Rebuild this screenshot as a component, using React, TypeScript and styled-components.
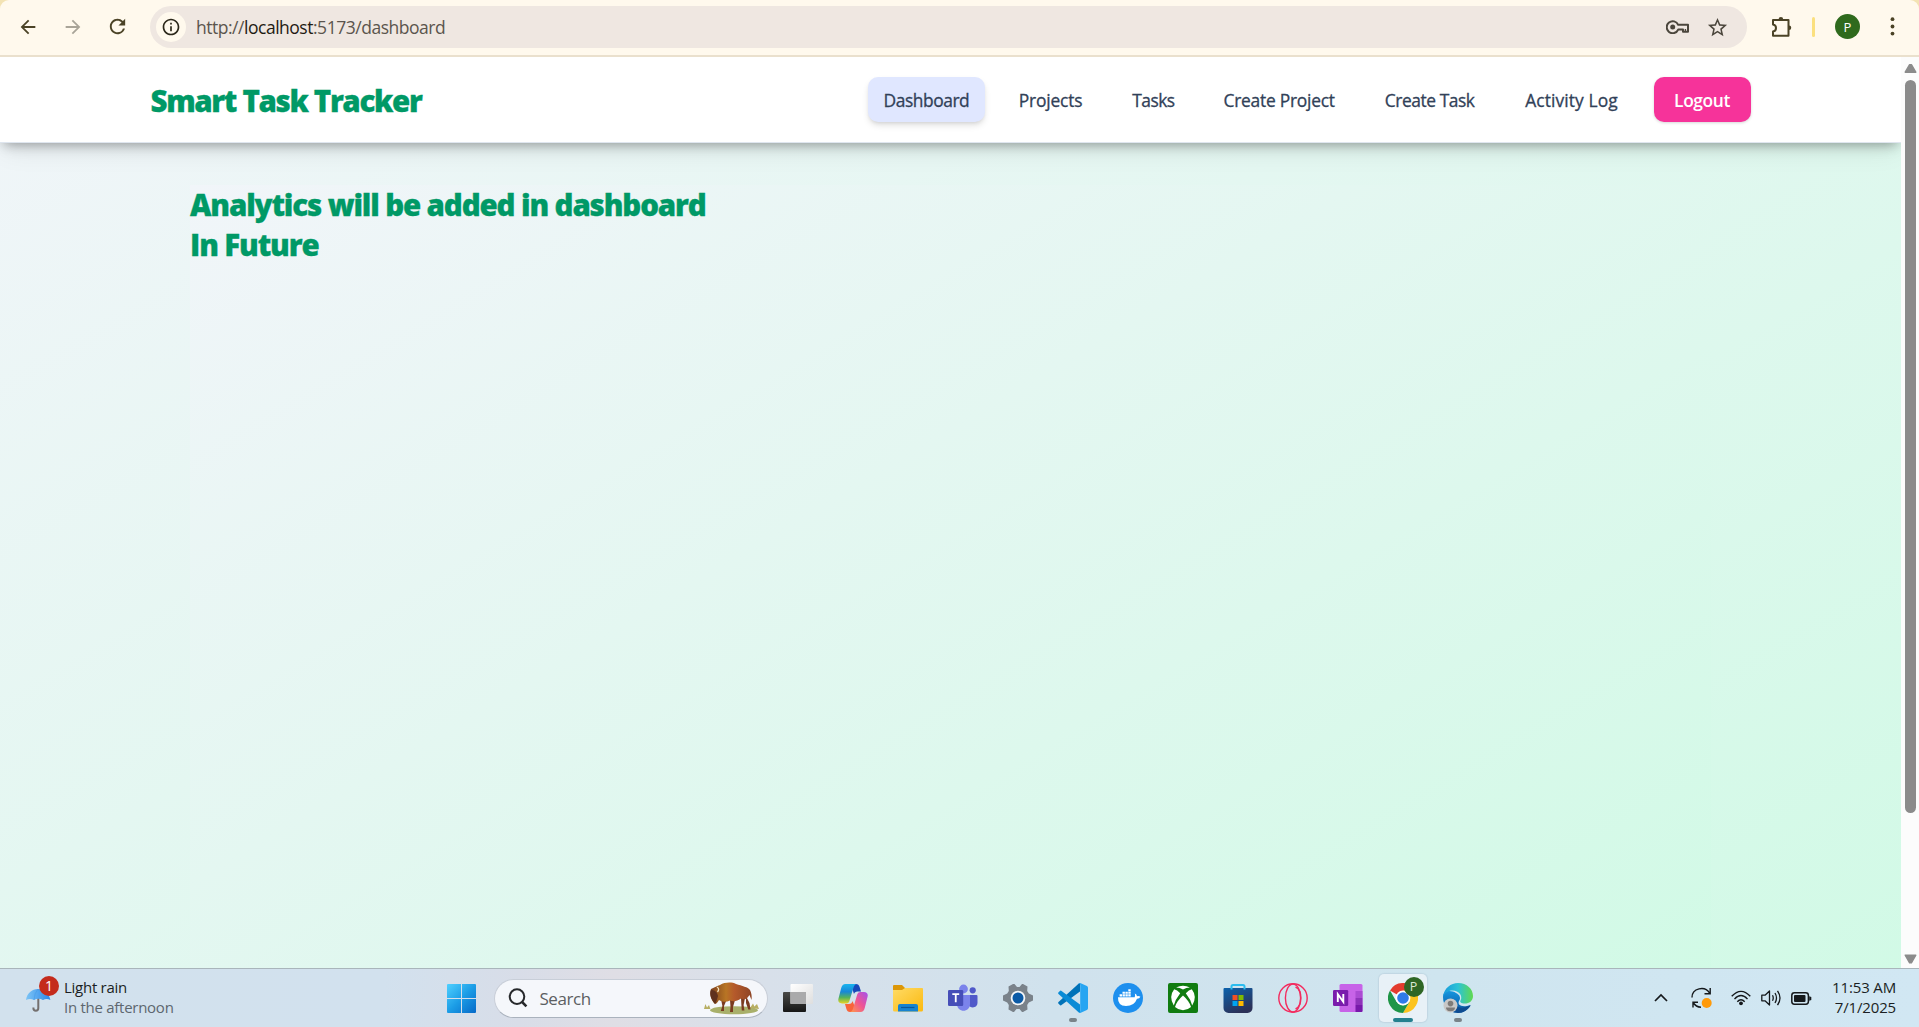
import React from "react";
import styled, { createGlobalStyle } from "styled-components";
import { MdArrowBack, MdArrowForward, MdRefresh, MdInfoOutline, MdStarOutline } from "react-icons/md";

const uiFont = `"Segoe UI", "Open Sans", "Noto Sans", sans-serif`;

const GlobalStyle = createGlobalStyle`
  *, *::before, *::after { box-sizing: border-box; }
  body { margin: 0; font-family: ${uiFont}; overflow: hidden; }
  svg { display: block; flex: none; }
`;

const Screen = styled.div`
  display: flex;
  flex-direction: column;
  width: 1919px;
  height: 1027px;
  overflow: hidden;
`;

/* ---------- Browser toolbar ---------- */

const ToolbarFrame = styled.div`
  flex: none;
  background: #f3e3b4;
`;

const Toolbar = styled.header`
  display: flex;
  align-items: center;
  height: 57px;
  padding: 0 14px 2px 15px;
  background: #fff9ed;
  border-bottom: 2px solid #eae0cd;
  border-radius: 9px 9px 0 0;
  color: #4b4326;
`;

const ToolButton = styled.span<{ $dim?: boolean }>`
  display: grid;
  place-items: center;
  width: 45px;
  height: 45px;
  color: ${(p) => (p.$dim ? "#a9a498" : "#4b4326")};
`;

const NavButtons = styled.div`
  display: flex;
  margin-left: -10px;
`;

const AddressBar = styled.div`
  display: flex;
  align-items: center;
  width: 1597px;
  height: 42px;
  margin-left: 10px;
  padding: 0 18px 0 6px;
  background: #efe7e1;
  border-radius: 21px;
`;

const SiteInfo = styled.span`
  display: grid;
  place-items: center;
  width: 30px;
  height: 30px;
  border-radius: 50%;
  background: #fff9ed;
  color: #2b2719;
`;

const Url = styled.span`
  flex: 1;
  margin-left: 10px;
  padding-top: 1px;
  font-size: 17.5px;
  line-height: 24px;
  letter-spacing: -0.48px;
  color: #5b554d;
`;

const Host = styled.span`
  color: #1f1b13;
`;

const AddressIcons = styled.div`
  display: flex;
  align-items: center;
  gap: 17px;
  padding-top: 1px;
  color: #4b463c;
`;

const Divider = styled.span`
  width: 3px;
  height: 20px;
  margin-left: 19px;
  border-radius: 2px;
  background: #fbe07f;
`;

const Avatar = styled.span`
  display: grid;
  place-items: center;
  width: 25px;
  height: 25px;
  margin-left: 20px;
  border-radius: 50%;
  background: #2f6a1d;
  color: #fff;
  font-size: 13px;
`;

const Extensions = styled.span`
  margin-left: 24px;
`;

const Menu = styled.span`
  margin-left: 30px;
`;

/* ---------- Web page ---------- */

const Viewport = styled.div`
  display: flex;
  flex: none;
  height: 911px;
  overflow: hidden;
`;

const Page = styled.div`
  flex: none;
  width: 1901px;
  height: 1083px;
  background: linear-gradient(to bottom right, #f1f5f9, #d0fae5 97%);
`;

const NavBar = styled.nav`
  display: flex;
  align-items: center;
  justify-content: space-between;
  height: 86px;
  padding: 0 150.5px;
  background: #fff;
  border-bottom: 1px solid #dfe6ef;
  box-shadow: 0 5px 12px -4px rgba(0, 0, 0, 0.38), 0 12px 24px -4px rgba(0, 0, 0, 0.08);
`;

const Title = styled.h1<{ $spacing: number; $shift?: number }>`
  margin: 0;
  padding-top: ${(p) => p.$shift ?? 0}px;
  font-size: 29.5px;
  line-height: 40px;
  font-weight: 800;
  letter-spacing: ${(p) => p.$spacing}px;
  -webkit-text-stroke: 0.3px currentColor;
  color: #009966;
`;

const Links = styled.div`
  display: flex;
  align-items: center;
  gap: 18.33px;
`;

const NavLink = styled.a<{ $width: number; $spacing: number; $active?: boolean }>`
  width: ${(p) => p.$width}px;
  height: 45px;
  border-radius: 10px;
  padding-left: 16px;
  white-space: nowrap;
  font-size: 17.4px;
  line-height: 46px;
  font-weight: 500;
  letter-spacing: ${(p) => p.$spacing}px;
  -webkit-text-stroke: 0.3px currentColor;
  color: #314158;
  background: ${(p) => (p.$active ? "#e0e7ff" : "transparent")};
  box-shadow: ${(p) => (p.$active ? "0 4px 7px -1px rgba(0,0,0,.13), 0 2px 4px -2px rgba(0,0,0,.12)" : "none")};
`;

const Logout = styled.button`
  width: 97px;
  height: 45px;
  border: 0;
  border-radius: 10px;
  padding: 0;
  background: #f6339a;
  box-shadow: 0 1px 3px rgba(0, 0, 0, 0.16);
  color: #fff;
  font-family: inherit;
  font-size: 17.4px;
  font-weight: 600;
  line-height: 46px;
  letter-spacing: -0.4px;
`;

const Content = styled.main`
  width: 1521px;
  height: 911px;
  margin: 42px auto 0;
  background: linear-gradient(to bottom right, #f1f5f9, #d0fae5 97%);
`;

const ScrollTrack = styled.div`
  display: flex;
  flex-direction: column;
  align-items: center;
  width: 18px;
  height: 911px;
  padding: 6px 0 3px 1px;
  background: #fcfcfc;
`;

const ScrollThumb = styled.div`
  width: 11px;
  height: 733px;
  margin: 6px 0 auto;
  border-radius: 6px;
  background: #8b8b8b;
`;

/* ---------- Taskbar ---------- */

const Taskbar = styled.footer`
  display: flex;
  align-items: center;
  flex: none;
  height: 59px;
  border-top: 1px solid #a9b5bb;
  background: linear-gradient(90deg, #d2e1ed 0%, #d2e1ee 20%, #d8dde8 27%, #dfdee5 32%, #d8e0ea 40%, #d0e2ed 55%, #cfe5ef 75%, #d1e7f3 100%);
`;

const Weather = styled.div`
  display: flex;
  align-items: center;
  width: 434px;
  padding-left: 26px;
`;

const WeatherIcon = styled.span`
  position: relative;
  width: 38px;
  height: 44px;
  padding-top: 11px;
`;

const Badge = styled.span`
  position: absolute;
  top: 0;
  left: 13px;
  width: 20px;
  height: 20px;
  border-radius: 50%;
  background: #c42b1c;
  color: #fff;
  font-size: 14px;
  line-height: 20px;
  text-align: center;
`;

const TwoLines = styled.div<{ $right?: boolean }>`
  padding-bottom: 2px;
  font-size: 15px;
  line-height: 20px;
  letter-spacing: ${(p) => (p.$right ? -0.15 : -0.27)}px;
  color: #1b1f23;
  text-align: ${(p) => (p.$right ? "right" : "left")};
  white-space: nowrap;
`;

const Muted = styled.div`
  color: #5d676f;
`;

const Cell = styled.div`
  position: relative;
  display: grid;
  place-items: center;
  width: 55px;
  height: 58px;
`;

const SearchBox = styled.div`
  display: flex;
  align-items: center;
  width: 274px;
  height: 39px;
  margin: 0 2.5px 0 4.5px;
  padding: 0 7px 0 13px;
  border: 1px solid #c8ced8;
  border-bottom-color: #aab2bd;
  border-radius: 20px;
  background: #f5f7fb;
`;

const SearchLabel = styled.span`
  flex: 1;
  margin-left: 12px;
  padding-top: 1px;
  font-size: 17px;
  line-height: 24px;
  letter-spacing: -0.45px;
  color: #5c5e62;
`;

const ActiveTile = styled.div`
  display: grid;
  place-items: center;
  width: 48px;
  height: 48px;
  border-radius: 5px;
  background: #e8f1f7;
  box-shadow: 0 0 1px 1px rgba(140, 160, 180, 0.2);
`;

const ProfileBadge = styled.span`
  position: absolute;
  top: 8px;
  left: 28.5px;
  width: 20px;
  height: 20px;
  border-radius: 50%;
  background: #2f6625;
  color: #dbe8d5;
  font-size: 12.5px;
  line-height: 20px;
  text-align: center;
`;

const Indicator = styled.span<{ $active?: boolean }>`
  position: absolute;
  bottom: 5px;
  left: 50%;
  transform: translateX(-50%);
  width: ${(p) => (p.$active ? 20 : 8)}px;
  height: 4px;
  border-radius: 2px;
  background: ${(p) => (p.$active ? "#23808f" : "#798389")};
`;

const Tray = styled.div`
  display: flex;
  align-items: center;
  margin-left: auto;
  padding-right: 23px;
  color: #15191c;
`;

const TrayIcons = styled.div`
  display: flex;
  align-items: center;
  gap: 10px;
  margin-right: 20px;
`;

const Gap = styled.span<{ $w: number }>`
  width: ${(p) => p.$w}px;
`;

/* ---------- Drawings ---------- */

const KeyIcon = () => (
  <svg width="23" height="14" viewBox="0 0 23 14" fill="none" stroke="currentColor" strokeWidth="2">
    <path d="M12.2 4.8H22V11.8H17V9.6H12.2A6 6 0 1 1 12.2 4.8Z" strokeLinejoin="round" />
    <path d="M19.4 9V11" strokeWidth="1.4" />
    <circle cx="6.7" cy="7" r="2.5" fill="currentColor" stroke="none" />
  </svg>
);

const PuzzleIcon = () => (
  <svg width="22" height="22" viewBox="0 0 22 22" fill="none" stroke="currentColor" strokeWidth="2" strokeLinejoin="round">
    <path d="M2 4H17.5V19.8H2V15.6C6 15 6 9 2 8.4Z" />
    <path d="M7.6 3.4a2.3 2.3 0 0 1 4.6 0ZM18 9.5a2.2 2.2 0 0 1 0 4.5Z" fill="currentColor" stroke="none" />
  </svg>
);

const DotsIcon = () => (
  <svg width="5" height="19" viewBox="0 0 5 19" fill="currentColor">
    <circle cx="2.5" cy="2.2" r="1.9" />
    <circle cx="2.5" cy="9.5" r="1.9" />
    <circle cx="2.5" cy="16.6" r="1.9" />
  </svg>
);

const Triangle = ({ down }: { down?: boolean }) => (
  <svg width="13" height="11" viewBox="0 0 13 11" fill="#8b8b8b" stroke="#8b8b8b" strokeWidth="1.4" strokeLinejoin="round">
    <path d={down ? "M1.2 1.2H11.8L7.4 8.8H5.6Z" : "M1.2 9.2H11.8L7.4 1.6H5.6Z"} />
  </svg>
);

const Umbrella = () => (
  <svg width="25" height="26" viewBox="0 0 25 26">
    <defs>
      <linearGradient id="umb" x1="0" x2="1">
        <stop offset="0" stopColor="#7cc4f5" />
        <stop offset="1" stopColor="#2a86ea" />
      </linearGradient>
    </defs>
    <path d="M12.3 11V21.3a2.4 2.4 0 0 1-4.9 0V20.4" fill="none" stroke="#74706f" strokeWidth="2" />
    <path d="M0 13C1 6 6 2 12 2S23 6 24.4 13Q20.5 10.8 17 13Q12.2 10.6 8 13Q4 10.8 0 13Z" fill="url(#umb)" />
    <path d="M8 13Q8.3 6 12 2Q16.4 6 17 13" fill="none" stroke="#4b9fe9" strokeWidth=".8" />
  </svg>
);

const StartIcon = () => (
  <svg width="29" height="29" viewBox="0 0 29 29">
    <defs>
      <linearGradient id="win" x1="0" y1="0" x2="1" y2="1">
        <stop offset="0" stopColor="#4fd0ff" />
        <stop offset=".5" stopColor="#1c9de6" />
        <stop offset="1" stopColor="#0669c8" />
      </linearGradient>
    </defs>
    <path d="M1 0H14V14H0V1A1 1 0 0 1 1 0ZM15 0H28A1 1 0 0 1 29 1V14H15ZM0 15H14V29H1A1 1 0 0 1 0 28ZM15 15H29V28A1 1 0 0 1 28 29H15Z" fill="url(#win)" />
  </svg>
);

const SearchGlass = () => (
  <svg width="20" height="20" viewBox="0 0 20 20" fill="none" stroke="#26282b">
    <circle cx="9" cy="8.6" r="7.3" strokeWidth="2" />
    <path d="M14 13.8L18.4 18.4" strokeWidth="2.6" />
  </svg>
);

const Bison = () => (
  <svg width="57" height="33" viewBox="0 0 57 33">
    <defs>
      <linearGradient id="bis" x1="0" x2="1">
        <stop offset="0" stopColor="#7b3f1d" />
        <stop offset=".38" stopColor="#b87524" />
        <stop offset=".58" stopColor="#b55a2b" />
        <stop offset="1" stopColor="#8e4526" />
      </linearGradient>
    </defs>
    <ellipse cx="31" cy="28.2" rx="24" ry="4" fill="#a9b06b" />
    <path d="M1 27L2.4 22L4 25.5L6 23L7.4 27ZM47 26L50 21.5L51.4 24.5L54 22L56 27Z" fill="#b7ae62" />
    <path d="M18 17H24L21 24V29H17.8L19.4 24ZM27 18H32L30 25V30H27L27.5 25ZM38 16H42L40.6 23L41.4 28.500H38.8L38.400 23ZM43 14L46.500 21L47.500 27.500H45.300L43 21Z" fill="#7a3b20" />
    <path d="M8 7C12 5 14 4 17 3C22 0 29 0 33 2C39 4 45 5 47 8C48.500 11 49 14 48.500 18L46.500 13C44 17 42 18 38 16.500C34 19 31 20 27 18.500C23 20.500 19 20 16 18C14 21 13 22 12 22C8 18 6 12 8 7Z" fill="url(#bis)" />
    <path d="M8 8C12 8 14 10 15 14C14 17 13 21 12 22C9 18 6 13 8 8Z" fill="#5f301d" />
    <path d="M14 5Q17 7 14.500 10" stroke="#f2e2c0" strokeWidth="1.300" fill="none" />
  </svg>
);

const TaskViewIcon = () => (
  <svg width="30" height="30" viewBox="0 0 30 30">
    <defs>
      <linearGradient id="tv" x2="0" y2="1"><stop offset="0" stopColor="#4a4a48" /><stop offset="1" stopColor="#161616" /></linearGradient>
      <linearGradient id="tw" x2="1" y2="1"><stop offset="0" stopColor="#fff" /><stop offset="1" stopColor="#dedede" /></linearGradient>
    </defs>
    <rect x="0" y="9" width="23" height="20" rx="1" fill="url(#tv)" />
    <rect x="7.5" y="1" width="22.5" height="20" rx="1" fill="url(#tw)" />
    <path d="M7.5 9H23V21H7.5Z" fill="#aaaaab" />
  </svg>
);

const CopilotIcon = () => (
  <svg width="30" height="30" viewBox="0 0 30 30">
    <defs>
      <linearGradient id="cpa" x2="0" y2="1"><stop offset="0" stopColor="#19b4ee" /><stop offset=".4" stopColor="#1787d8" /><stop offset=".7" stopColor="#55b35b" /><stop offset="1" stopColor="#e7d425" /></linearGradient>
      <linearGradient id="cpb" x1="1" x2="0" y2="1"><stop offset="0" stopColor="#a451ed" /><stop offset=".5" stopColor="#ee5495" /><stop offset="1" stopColor="#ff9b48" /></linearGradient>
    </defs>
    <path d="M14 1H18C20 1 21 2 21.6 4L23 8.5H19.5C17.5 8.5 16.5 9.5 16 11L14 5Z" fill="#1848b9" />
    <path d="M16 29H12C10 29 9 28 8.4 26L7 21H11C13 21 14 20 14.5 18L17 24Z" fill="#f8643b" />
    <path d="M7.5 1H18.5C16.6 1.4 16 3 15.4 5L11.2 18.4C10.6 20 9.4 20.4 8 20.4H4C1 20.4-.3 18.5.5 15.5L3.2 5C4 2.2 5.2 1 7.5 1Z" fill="url(#cpa)" />
    <path d="M22.5 29H12C14 28.6 14.6 27 15.2 25L19.2 11.6C19.8 9.8 21 9 22.6 9H26C29 9 30.4 11 29.5 14L26.8 24.8C26 27.7 24.8 29 22.5 29Z" fill="url(#cpb)" />
  </svg>
);

const FolderIcon = () => (
  <svg width="30" height="30" viewBox="0 0 30 30">
    <defs>
      <linearGradient id="fo" x2="1" y2="1"><stop offset="0" stopColor="#ffdb66" /><stop offset="1" stopColor="#fbb90f" /></linearGradient>
    </defs>
    <path d="M0 3A1 1 0 0 1 1 2H9L12 5V10H0Z" fill="#dc9708" />
    <path d="M0 7H9L12 5H29A1 1 0 0 1 30 6V27A1.5 1.5 0 0 1 28.5 28.5H1.5A1.5 1.5 0 0 1 0 27Z" fill="url(#fo)" />
    <path d="M5 28.5V23A2 2 0 0 1 7 21H23A2 2 0 0 1 25 23V28.5Z" fill="#1683d0" />
    <path d="M8 24.5H21.5" stroke="#0a579a" strokeWidth="1.2" />
  </svg>
);

const TeamsIcon = () => (
  <svg width="30" height="30" viewBox="0 0 30 30">
    <circle cx="15.5" cy="6" r="4.4" fill="#7b83eb" />
    <circle cx="24.7" cy="7.3" r="3.1" fill="#5059c9" />
    <path d="M20 12H28.5A1 1 0 0 1 29.5 13V19.5C29.5 25 23 26 20 22Z" fill="#5059c9" />
    <path d="M9 12H22V21C22 30 9 30 9 21Z" fill="#7b83eb" />
    <rect x="0" y="7" width="15.2" height="16" rx="1.3" fill="#464eb8" />
    <path d="M4.3 11.2H11.2M7.75 11V19.3" stroke="#fff" strokeWidth="1.8" />
  </svg>
);

const GearIcon = () => (
  <svg width="30" height="30" viewBox="0 0 30 30">
    <path d="M10 1H11.5L14 4H16.5L19 1H20L24.5 3.5L24.2 8L25.8 10.5L30 12.5V17.5L25.8 19.5L24.2 22L24.5 26.5L20 29H19L16.5 26H13.5L11 29H10L5.5 26.5L5.8 22L4.2 19.5L0 17.5V12.5L4.2 10.5L5.8 8L5.5 3.5Z" fill="#7a828a" />
    <circle cx="15" cy="15" r="7.3" fill="#f4f6f8" />
    <circle cx="15" cy="15" r="5.5" fill="#0b5aa6" />
  </svg>
);

const VsCodeIcon = () => (
  <svg width="30" height="30" viewBox="0 0 30 30">
    <path d="M22 0L22 8.5L3.2 22.2Q2.5 22.6 1.9 22.1L.4 20.6Q-.2 19.8.5 19.1L20.5.8Z" fill="#0072b8" />
    <path d="M22 30L22 21.5L3.2 7.8Q2.5 7.4 1.9 7.9L.4 9.4Q-.2 10.2.5 10.9L20.5 29.2Z" fill="#0a8bd6" />
    <path d="M21 .2Q22 0 22.8.3L28.9 3Q30 3.6 30 4.8V25.2Q30 26.4 28.9 27L22.8 29.8Q21.5 30.2 20.5 29.2Q22.2 29.7 22.2 28V2Q22.2.2 20.5.8Z" fill="#27a5f2" />
  </svg>
);

const DockerIcon = () => (
  <svg width="30" height="30" viewBox="0 0 30 30">
    <circle cx="15" cy="15" r="15" fill="#1d8fee" />
    <path d="M5 14.3H21.7Q22.5 12.3 21.8 10.6Q23.7 11.4 24 13.2Q26 12.8 27.4 13.8Q26.5 15.8 24 15.7Q21.4 23 13 23Q4.6 23 5 14.3Z" fill="#fff" />
    <path d="M6.6 11.2H9V13.6H6.6ZM9.5 11.2H11.9V13.6H9.5ZM12.4 11.2H14.8V13.6H12.4ZM15.3 11.2H17.7V13.6H15.3ZM9.5 8.7H11.9V10.8H9.5ZM12.4 8.7H14.8V10.8H12.4ZM15.3 8.7H17.7V10.8H15.3ZM15.3 6.2H17.7V8.3H15.3Z" fill="#fff" />
  </svg>
);

const XboxIcon = () => (
  <svg width="30" height="30" viewBox="0 0 30 30">
    <rect width="30" height="30" rx="2" fill="#107c10" />
    <path d="M8 4.500Q15 .8 22 4.500Q18.500 4.400 15 6.600Q11.500 4.400 8 4.500Z" fill="#fff" />
    <path d="M6.200 6.200Q9 6.600 12.200 10.200Q7.200 16.500 5.800 22.600Q.4 13.500 6.200 6.200Z" fill="#fff" />
    <path d="M23.800 6.200Q21 6.600 17.800 10.200Q22.800 16.500 24.200 22.600Q29.600 13.500 23.800 6.200Z" fill="#fff" />
    <path d="M15 12.600Q21.500 18.400 23 24Q19.500 27.200 15 27.200Q10.500 27.200 7 24Q8.500 18.400 15 12.600Z" fill="#fff" />
  </svg>
);

const StoreIcon = () => (
  <svg width="30" height="30" viewBox="0 0 30 30">
    <defs>
      <linearGradient id="st" x2=".5" y2="1"><stop offset="0" stopColor="#0b62ad" /><stop offset="1" stopColor="#2b3158" /></linearGradient>
    </defs>
    <path d="M.5 6A1 1 0 0 1 1.5 5H28.5A1 1 0 0 1 29.5 6V25A5 5 0 0 1 24.5 30H5.5A5 5 0 0 1 .5 25Z" fill="url(#st)" />
    <path d="M8.5 6.5V3.5A1.5 1.5 0 0 1 10 2H20A1.5 1.5 0 0 1 21.5 3.5V6.5" fill="none" stroke="#2bbcee" strokeWidth="2" />
    <path d="M9.5 12H14.5V17H9.5Z" fill="#f25022" />
    <path d="M15.5 12H20.5V17H15.5Z" fill="#7fba00" />
    <path d="M9.5 18H14.5V23H9.5Z" fill="#00a4ef" />
    <path d="M15.5 18H20.5V23H15.5Z" fill="#ffb900" />
  </svg>
);

const OperaIcon = () => (
  <svg width="30" height="30" viewBox="0 0 30 30" fill="none" stroke="#f32b5e" strokeWidth="1.4">
    <circle cx="15" cy="15" r="14.2" />
    <ellipse cx="15" cy="15" rx="7.6" ry="13.9" />
    <path d="M17.5 4.2C24.6 7 24.6 23 17.5 25.8" />
  </svg>
);

const OneNoteIcon = () => (
  <svg width="30" height="30" viewBox="0 0 30 30">
    <rect x="6.5" y="1" width="23" height="28" rx="1.5" fill="#c763e8" />
    <path d="M22.5 8H29.5V15H22.5Z" fill="#ab4bd3" />
    <path d="M22.5 15H29.5V22H22.5Z" fill="#8e33ba" />
    <path d="M22.5 22H29.5V28A1 1 0 0 1 28.5 29H22.5Z" fill="#7719aa" />
    <rect x="0" y="7" width="15.2" height="16" rx="1.3" fill="#7a1bac" />
    <path d="M4.8 19V11.2L10.3 18.8V11" fill="none" stroke="#fff" strokeWidth="1.9" />
  </svg>
);

const ChromeIcon = () => (
  <svg width="30" height="30" viewBox="0 0 30 30">
    <path d="M15 15L2 7.5A15 15 0 0 1 28 7.5Z" fill="#e33b2e" />
    <path d="M15 7.5H28A15 15 0 0 1 15 30L21.5 18.7Z" fill="#fcc31e" />
    <path d="M2 7.5L8.5 18.7L15 22.5L21.5 18.7L15 30A15 15 0 0 1 2 7.5Z" fill="#1e9547" />
    <circle cx="15" cy="15" r="7.4" fill="#fff" />
    <circle cx="15" cy="15" r="5.8" fill="#2f7bea" />
  </svg>
);

const EdgeIcon = () => (
  <svg width="30" height="30" viewBox="0 0 30 30">
    <defs>
      <linearGradient id="ea" x2="1"><stop offset="0" stopColor="#1899dc" /><stop offset=".5" stopColor="#2cc3d5" /><stop offset="1" stopColor="#61d94e" /></linearGradient>
      <linearGradient id="eb" x2="0" y2="1"><stop offset="0" stopColor="#1596df" /><stop offset="1" stopColor="#0b529d" /></linearGradient>
    </defs>
    <path d="M0 14C0 7 8 7 13 10C17 12 18 15 16 18C14 22 19 25 27.5 22C25 27 20 30 15 30C6 30 0 23 0 14Z" fill="url(#eb)" />
    <path d="M0 14C1 5 8 0 15 0C24 0 30 6 30 13C30 18 26 20.5 22 20.5C18 20.5 16.5 19 17.5 17.5C20 13 16 7.5 9.5 7.5C5 7.5 1.5 10 0 14Z" fill="url(#ea)" />
    <path d="M9.5 15C9 22 16 27 24.5 23.5L27.8 22.3C25 27 20.5 30 15 30C8 27 7 20 9.5 15Z" fill="#0d4c91" />
    <circle cx="7.5" cy="22.5" r="7" fill="#c9c8c7" />
    <circle cx="7.5" cy="20.6" r="2.8" fill="#7e7b79" />
    <path d="M3 24.5H12Q12 28.2 7.5 28.2Q3 28.2 3 24.5Z" fill="#7e7b79" />
  </svg>
);

const ChevronIcon = () => (
  <svg width="14" height="10" viewBox="0 0 14 10" fill="none" stroke="currentColor" strokeWidth="1.7">
    <path d="M1 8L7 2L13 8" />
  </svg>
);

const SyncIcon = () => (
  <svg width="21" height="22" viewBox="0 0 21 22" fill="none" stroke="currentColor" strokeWidth="1.4">
    <path d="M1 10.5C1 1 14 -1.5 18.5 6M19.2 1V6.7H13.5M2 20.5V15.2H7M2 15.5Q5 20 10 20.3" />
    <circle cx="15.7" cy="16" r="5" fill="#ff9a09" stroke="none" />
  </svg>
);

const WifiIcon = () => (
  <svg width="20" height="16" viewBox="0 0 20 16" fill="none" stroke="currentColor" strokeWidth="1.4">
    <path d="M.7 6.300Q10-3.500 19.3 6.300M3.5 9.100Q10 2 16.5 9.100M6.300 11.700Q10 7.800 13.700 11.700" />
    <circle cx="10" cy="13.3" r="1.9" fill="currentColor" stroke="none" />
  </svg>
);

const SpeakerIcon = () => (
  <svg width="20" height="18" viewBox="0 0 20 18" fill="none" stroke="currentColor" strokeWidth="1.3" strokeLinejoin="round">
    <path d="M.8 6.2H4L8.5 2V16L4 11.8H.8Z" />
    <path d="M11.5 6.300Q13 9 11.5 11.700M14 4Q17 9 14 14M16.5 1.800Q21.5 9 16.5 16.200" />
  </svg>
);

const BatteryIcon = () => (
  <svg width="21" height="13" viewBox="0 0 21 13">
    <rect x=".8" y=".8" width="16.6" height="11.4" rx="2.6" fill="none" stroke="currentColor" strokeWidth="1.5" />
    <rect x="3" y="3" width="11.5" height="7" rx="1" fill="currentColor" />
    <path d="M18.2 4.3L20.3 5V8L18.2 8.7Z" fill="currentColor" />
  </svg>
);

const links = [
  { label: "Dashboard", width: 117, spacing: -0.45, active: true },
  { label: "Projects", width: 95, spacing: -0.2 },
  { label: "Tasks", width: 73, spacing: -0.5 },
  { label: "Create Project", width: 143, spacing: -0.25 },
  { label: "Create Task", width: 122, spacing: -0.45 },
  { label: "Activity Log", width: 126, spacing: 0.1 },
];

const apps: { name: string; Icon: React.FC; state?: "open" | "active" }[] = [
  { name: "task-view", Icon: TaskViewIcon },
  { name: "copilot", Icon: CopilotIcon },
  { name: "explorer", Icon: FolderIcon },
  { name: "teams", Icon: TeamsIcon },
  { name: "settings", Icon: GearIcon },
  { name: "vscode", Icon: VsCodeIcon, state: "open" },
  { name: "docker", Icon: DockerIcon },
  { name: "xbox", Icon: XboxIcon },
  { name: "store", Icon: StoreIcon },
  { name: "opera", Icon: OperaIcon },
  { name: "onenote", Icon: OneNoteIcon },
  { name: "chrome", Icon: ChromeIcon, state: "active" },
  { name: "edge", Icon: EdgeIcon, state: "open" },
];

export default function App() {
  return (
    <Screen>
      <GlobalStyle />
      <ToolbarFrame>
        <Toolbar>
          <NavButtons>
            <ToolButton><MdArrowBack size={22} /></ToolButton>
            <ToolButton $dim><MdArrowForward size={22} /></ToolButton>
            <ToolButton><MdRefresh size={23} /></ToolButton>
          </NavButtons>
          <AddressBar>
            <SiteInfo><MdInfoOutline size={20} /></SiteInfo>
            <Url>http://<Host>localhost</Host>:5173/dashboard</Url>
            <AddressIcons>
              <KeyIcon />
              <MdStarOutline size={23} />
            </AddressIcons>
          </AddressBar>
          <Extensions><PuzzleIcon /></Extensions>
          <Divider />
          <Avatar>P</Avatar>
          <Menu><DotsIcon /></Menu>
        </Toolbar>
      </ToolbarFrame>

      <Viewport>
        <Page>
          <NavBar>
            <Title $spacing={-1.35} $shift={3}>Smart Task Tracker</Title>
            <Links>
              {links.map((l) => (
                <NavLink key={l.label} $width={l.width} $spacing={l.spacing} $active={l.active}>{l.label}</NavLink>
              ))}
              <Logout>Logout</Logout>
            </Links>
          </NavBar>
          <Content>
            <Title as="h2" $spacing={-1.14}>Analytics will be added in dashboard<br />In Future</Title>
          </Content>
        </Page>
        <ScrollTrack>
          <Triangle />
          <ScrollThumb />
          <Triangle down />
        </ScrollTrack>
      </Viewport>

      <Taskbar>
        <Weather>
          <WeatherIcon>
            <Umbrella />
            <Badge>1</Badge>
          </WeatherIcon>
          <TwoLines>
            <div>Light rain</div>
            <Muted>In the afternoon</Muted>
          </TwoLines>
        </Weather>
        <Cell><StartIcon /></Cell>
        <SearchBox>
          <SearchGlass />
          <SearchLabel>Search</SearchLabel>
          <Bison />
        </SearchBox>
        {apps.map(({ name, Icon, state }) => (
          <Cell key={name}>
            {state === "active" ? <ActiveTile><Icon /></ActiveTile> : <Icon />}
            {state === "active" && <ProfileBadge>P</ProfileBadge>}
            {state && <Indicator $active={state === "active"} />}
          </Cell>
        ))}
        <Tray>
          <ChevronIcon />
          <Gap $w={23} />
          <SyncIcon />
          <Gap $w={19} />
          <TrayIcons>
            <WifiIcon />
            <SpeakerIcon />
            <BatteryIcon />
          </TrayIcons>
          <TwoLines $right>
            <div>11:53 AM</div>
            <div>7/1/2025</div>
          </TwoLines>
        </Tray>
      </Taskbar>
    </Screen>
  );
}
